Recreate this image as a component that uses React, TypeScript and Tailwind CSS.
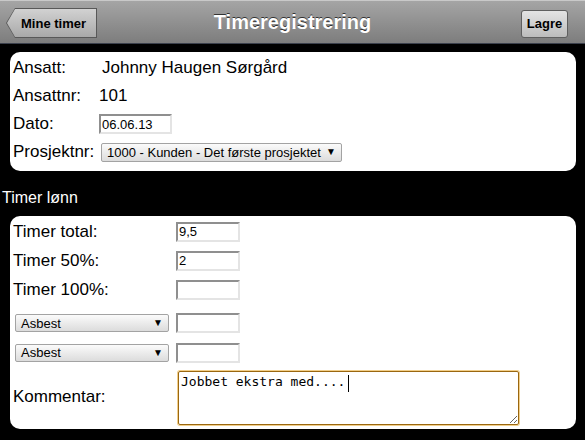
import React from "react";

const sans = { fontFamily: '"Liberation Sans", Arial, sans-serif' };

// little fake select, the native one renders differently in chrome
const FakeSelect = ({ label, className }: { label: string; className: string }) => (
  <div
    className={`flex items-center justify-between border border-[#a3a3a3] rounded-[2px] bg-gradient-to-b from-[#fbfbfb] to-[#dcdcdc] text-[13px] text-black pl-[5px] pr-[5px] ${className}`}
  >
    <span className="leading-none">{label}</span>
    <span className="text-[10px] leading-none">▼</span>
  </div>
);

const TextInput = ({ value = "", className = "" }: { value?: string; className?: string }) => (
  <input
    readOnly
    defaultValue={value}
    className={`h-[20px] border-2 border-t-[#8f8f8f] border-l-[#8f8f8f] border-b-[#e4e4e4] border-r-[#e4e4e4] bg-white px-[1px] text-[13px] text-black outline-none ${className}`}
    style={sans}
  />
);

export default function App() {
  return (
    <div className="w-full h-[440px] bg-black overflow-hidden" style={sans}>
      {/* Header bar */}
      <div className="h-[44px] grid grid-cols-[1fr_auto_1fr] items-center border-t border-t-[#c9c9c9] border-b border-b-[#3b404c] bg-gradient-to-b from-[#a5a5a5] to-[#7d7d7d] px-[6px]">
        <div className="flex">
          <div className="relative w-[91px] h-[30px] mt-[2px] bg-[#585858] [clip-path:polygon(9px_0,100%_0,100%_100%,9px_100%,0_50%)]">
            <div className="absolute inset-[1px] bg-gradient-to-b from-[#d2d2d2] to-[#a9a9a9] [clip-path:polygon(8px_0,100%_0,100%_100%,8px_100%,0_50%)] flex items-center pl-[14px]">
              <span className="text-[13px] font-bold text-black leading-none">Mine timer</span>
            </div>
          </div>
        </div>
        <h1 className="text-[20px] font-bold text-white leading-none [text-shadow:0_-1px_0_#333]">
          Timeregistrering
        </h1>
        <div className="flex justify-end">
          <button className="w-[47px] h-[28px] mt-[3px] mr-[11px] border border-[#5f5f5f] rounded-[3px] bg-gradient-to-b from-[#e4e4e4] to-[#bcbcbc] text-[13px] font-bold text-black leading-none">
            Lagre
          </button>
        </div>
      </div>

      {/* Ansatt card */}
      <div className="ml-[10px] mr-[9px] mt-[8px] rounded-[10px] bg-white pl-[3px] pt-[2px] pb-[5px] text-[17px] text-black">
        <div className="grid grid-cols-[86px_1fr]">
          <div className="h-[28px] flex items-center">Ansatt:</div>
          <div className="h-[28px] flex items-center pl-[3px]">Johnny Haugen Sørgård</div>
          <div className="h-[28px] flex items-center">Ansattnr:</div>
          <div className="h-[28px] flex items-center">101</div>
          <div className="h-[28px] flex items-center">Dato:</div>
          <div className="h-[28px] flex items-center">
            <TextInput value="06.06.13" className="w-[73px]" />
          </div>
          <div className="h-[28px] flex items-center">Prosjektnr:</div>
          <div className="h-[28px] flex items-center pl-[2px]">
            <FakeSelect label="1000 - Kunden - Det første prosjektet" className="w-[241px] h-[19px]" />
          </div>
        </div>
      </div>

      <div className="h-[45px] flex items-center pt-[9px] pl-[2px] text-[16px] text-white">Timer lønn</div>

      {/* Timer card */}
      <div className="ml-[10px] mr-[9px] rounded-[10px] bg-white pl-[3px] pt-[1px] pb-[4px] text-[17px] text-black">
        <div className="grid grid-cols-[163px_1fr]">
          <div className="h-[29px] flex items-center">Timer total:</div>
          <div className="h-[29px] flex items-center">
            <TextInput value="9,5" className="w-[64px]" />
          </div>
          <div className="h-[29px] flex items-center">Timer 50%:</div>
          <div className="h-[29px] flex items-center">
            <TextInput value="2" className="w-[64px]" />
          </div>
          <div className="h-[29px] flex items-center">Timer 100%:</div>
          <div className="h-[29px] flex items-center">
            <TextInput className="w-[64px]" />
          </div>

          <div className="h-[30px] mt-[4px] flex items-center pl-[2px]">
            <FakeSelect label="Asbest" className="w-[154px] h-[18px]" />
          </div>
          <div className="h-[30px] mt-[4px] flex items-center">
            <TextInput className="w-[64px]" />
          </div>
          <div className="h-[29px] flex items-center pl-[2px]">
            <FakeSelect label="Asbest" className="w-[154px] h-[18px]" />
          </div>
          <div className="h-[29px] flex items-center">
            <TextInput className="w-[64px]" />
          </div>

          <div className="flex items-center pt-[4px] pb-[2px]">Kommentar:</div>
          <div className="pt-[4px] pl-[2px]">
            <div className="relative w-[341px] h-[54px]">
              <textarea
                readOnly
                defaultValue="Jobbet ekstra med...."
                className="block w-full h-full border border-[#9a6710] rounded-[2px] shadow-[0_0_0_1px_#f2cf8a] px-[2px] pt-[1px] text-[13px] leading-[17px] text-black outline-none"
                style={{ fontFamily: '"DejaVu Sans Mono", monospace' }}
              />
              {/* caret */}
              <span className="absolute left-[170px] top-[4px] w-[1px] h-[17px] bg-black" />
            </div>
          </div>
        </div>
      </div>
    </div>
  );
}
